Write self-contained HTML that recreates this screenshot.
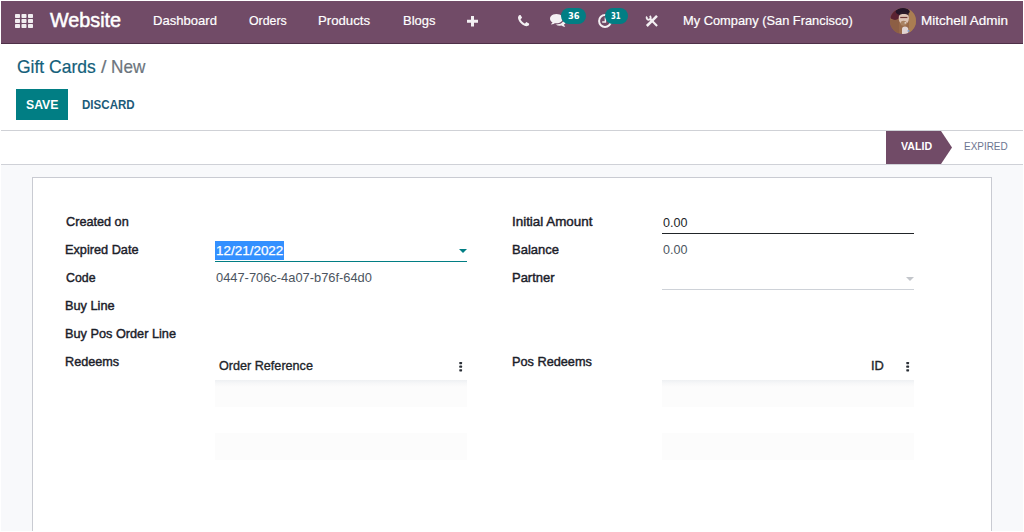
<!DOCTYPE html>
<html lang="en">
<head>
<meta charset="utf-8">
<title>Gift Cards / New</title>
<style>
*{box-sizing:border-box;margin:0;padding:0}
html,body{width:1024px;height:532px;overflow:hidden;background:#fff}
body{font-family:"Liberation Sans",sans-serif;font-size:13px;color:#212529;position:relative}
.abs,.m{position:absolute;white-space:nowrap;line-height:1}
.m{transform-origin:0 50%}
svg{display:block;overflow:visible}
#nav{position:absolute;left:1px;top:1px;width:1022px;height:43px;background:#714b67;border-bottom:1px solid #4e3048}
.badge{position:absolute;height:16px;border-radius:8px;background:#017e84}
#bg{position:absolute;left:1px;top:164px;width:1022px;height:367px;background:#f8f9fb;border-top:1px solid #cfd1d7}
#sheet{position:absolute;left:32px;top:177px;width:960px;height:354px;background:#fff;border:1px solid #c9cbd2;border-bottom:none}
#hr1{position:absolute;left:1px;top:130px;width:1022px;height:1px;background:#cfd1d6}
.stripe{position:absolute;height:27px;background:#fcfcfc}
.stripe.first{background:linear-gradient(#eef0f3,#f6f7f8 3px,#fcfcfc 7px)}
.line{position:absolute;height:1px}
.ic{opacity:.92}
.dj{font-family:"DejaVu Sans",sans-serif}
</style>
</head>
<body>
<header>
<!-- top navigation bar -->
<div id="nav"></div>
<svg class="abs" style="left:15.2px;top:14px;opacity:.9" width="18" height="14" viewBox="0 0 18 14"><g fill="#fff"><rect x="0" y="0" width="5" height="4" rx=".7"/><rect x="6.5" y="0" width="5" height="4" rx=".7"/><rect x="13" y="0" width="5" height="4" rx=".7"/><rect x="0" y="5" width="5" height="4" rx=".7"/><rect x="6.5" y="5" width="5" height="4" rx=".7"/><rect x="13" y="5" width="5" height="4" rx=".7"/><rect x="0" y="10" width="5" height="4" rx=".7"/><rect x="6.5" y="10" width="5" height="4" rx=".7"/><rect x="13" y="10" width="5" height="4" rx=".7"/></g></svg>
<span class="m" id="brand" style="left:49.60px;top:11.41px;font-size:19.6px;color:#fff;transform:scaleX(1.0095);-webkit-text-stroke:.5px #fff">Website</span>
<span class="m" id="n1" style="left:152.74px;top:13.69px;font-size:13.6px;color:#fff;transform:scaleX(0.9609);-webkit-text-stroke:.2px #fff">Dashboard</span>
<span class="m" id="n2" style="left:248.70px;top:13.69px;font-size:13.6px;color:#fff;transform:scaleX(0.9078);-webkit-text-stroke:.2px #fff">Orders</span>
<span class="m" id="n3" style="left:318.03px;top:13.69px;font-size:13.6px;color:#fff;transform:scaleX(0.9707);-webkit-text-stroke:.2px #fff">Products</span>
<span class="m" id="n4" style="left:402.55px;top:13.69px;font-size:13.6px;color:#fff;transform:scaleX(0.9546);-webkit-text-stroke:.2px #fff">Blogs</span>
<!-- plus -->
<svg class="abs ic" style="left:467px;top:15.6px" width="11" height="10.4" viewBox="0 0 11 10.4"><path fill="#fff" d="M4 0h3v3.7h4v3h-4v3.7h-3v-3.7h-4v-3h4z"/></svg>
<!-- phone -->
<svg class="abs ic" style="left:518.2px;top:15.3px" width="11.2" height="11.2" viewBox="192 128 1408 1408"><path fill="#fff" d="M1600 1240q0 27-10 70.500t-21 68.500q-21 50-122 106-94 51-186 51-27 0-53-3.500t-57.500-12.500-47-14.500-55.500-20.500-49-18q-98-35-175-83-127-79-264-216t-216-264q-48-77-83-175-3-9-18-49t-20.500-55.500-14.500-47-12.500-57.500-3.500-53q0-92 51-186 56-101 106-122 25-11 68.500-21t70.500-10q14 0 21 3 18 6 53 76 11 19 30 54t35 63.500 31 53.500q3 4 17.500 25t21.500 35.500 7 28.500q0 20-28.500 50t-62 55-62 53-28.500 46q0 9 5 22.500t8.500 20.500 14 24 11.500 19q76 137 174 235t235 174q2 1 19 11.500t24 14 20.500 8.500 22.500 5q18 0 46-28.500t53-62 55-62 50-28.500q14 0 28.500 7t35.500 21.500 25 17.500q25 15 53.500 31t63.500 35 54 30q70 35 76 53 3 7 3 21z"/></svg>
<!-- chat bubbles -->
<svg class="abs ic" style="left:549.8px;top:14.300px" width="16.300" height="12.800" viewBox="0 256 1792 1408"><path fill="#fff" d="M1408 768q0 139-94 257t-256.500 186.500-353.500 68.500q-86 0-176-16-124 88-278 128-36 9-86 16h-3q-11 0-20.500-8t-11.500-21q-1-3-1-6.500t.5-6.500 2-6l2.500-5t3.500-5.500 4-5 4.500-5 4-4.500q5-6 23-25t26-29.500 22.500-29 25-38.500 20.500-44q-124-72-195-177t-71-224q0-139 94-257t256.500-186.500 353.500-68.500 353.500 68.500 256.500 186.500 94 257zm384 256q0 120-71 224.500t-195 176.500q10 24 20.500 44t25 38.500 22.500 29 26 29.500 23 25q1 1 4 4.500t4.500 5 4 5 3.500 5.500l2.500 5t2 6 .5 6.500-1 6.500q-3 14-13 22t-22 7q-50-7-86-16-154-40-278-128-90 16-176 16-271 0-472-132 58 4 88 4 161 0 309-45t264-129q125-92 192-212t67-254q0-77-23-152 129 71 204 178t75 230z"/></svg>
<div class="badge" style="left:561px;top:8px;width:25px"></div>
<span class="m dj" id="b36" style="left:567.70px;top:12.10px;font-size:9px;color:#fff;transform:scaleX(0.9215);font-weight:bold">36</span>
<!-- clock -->
<svg class="abs ic" style="left:598px;top:13.900px" width="14" height="14" viewBox="0 0 14 14"><circle cx="7" cy="7" r="5.9" fill="none" stroke="#fff" stroke-width="2"/><path d="M7.4 3.4v4.6h-3.2" fill="none" stroke="#fff" stroke-width="1.5"/></svg>
<div class="badge" style="left:605px;top:8px;width:23px"></div>
<span class="m dj" id="b31" style="left:611.10px;top:12.10px;font-size:9px;color:#fff;transform:scaleX(0.7666);font-weight:bold">31</span>
<!-- tools -->
<svg class="abs ic" style="left:646px;top:15px" width="12" height="12" viewBox="0 0 12 12"><g fill="none" stroke="#fff"><path d="M11 .8L.8 11" stroke-width="2.500"/><path d="M4 3.800L11.100 10.900" stroke-width="2.100"/><path d="M3.700 1A2 2 0 1 1 1 1.600" stroke-width="1.900"/></g></svg>
<span class="m" id="n5" style="left:682.76px;top:13.69px;font-size:13.6px;color:#fff;transform:scaleX(0.9441);-webkit-text-stroke:.2px #fff">My Company (San Francisco)</span>
<!-- avatar -->
<div class="abs" style="left:890px;top:8px;width:26px;height:26px;border-radius:50%;overflow:hidden"><svg width="26" height="26" viewBox="0 0 26 26"><rect width="26" height="26" fill="#98694a"/><rect x="19" y="0" width="7" height="26" fill="#aa7d52"/><rect x="0" y="12" width="9" height="14" fill="#8d5f45"/><ellipse cx="5" cy="7" rx="5.500" ry="5" fill="#5a2232"/><ellipse cx="12.700" cy="3.600" rx="7" ry="3.800" fill="#241528"/><ellipse cx="13.800" cy="10.200" rx="5.100" ry="6.300" fill="#dcc3b6"/><path d="M8.800 7.500c.6-2.800 2.600-3.900 5-3.900s4.400 1.100 5 3.900c-1.600-1.200-3.200-1.600-5-1.600s-3.400.4-5 1.600z" fill="#2a1a2a"/><rect x="10.200" y="8.900" width="7.200" height="1.200" fill="#6e3838"/><ellipse cx="13.600" cy="15.200" rx="3.100" ry="2.500" fill="#a98263"/><rect x="14.600" y="14.300" width="1.400" height="1.200" fill="#f2ece8"/><path d="M12 26v-5q0-2.500 3-2.500t3.300 2.500v5z" fill="#e0d3d4"/><rect x="17.600" y="22" width="1.800" height="1.800" fill="#7f9fd6"/></svg></div>
<span class="m" id="n6" style="left:920.91px;top:13.69px;font-size:13.6px;color:#fff;transform:scaleX(0.9916);-webkit-text-stroke:.2px #fff">Mitchell Admin</span>
</header>
<section>
<!-- control panel -->
<span class="m" id="bc1" style="left:17.00px;top:56.92px;font-size:19px;color:#13607a;transform:scaleX(0.9198);-webkit-text-stroke:.2px #13607a">Gift Cards</span>
<span class="m" id="bc2" style="left:100.50px;top:56.92px;font-size:19px;color:#6c757d;transform:scaleX(1.0333);-webkit-text-stroke:.2px #6c757d">/</span>
<span class="m" id="bc3" style="left:110.90px;top:56.92px;font-size:19px;color:#6c757d;transform:scaleX(0.9038);-webkit-text-stroke:.2px #6c757d">New</span>
<div class="abs" id="save" style="left:16px;top:89px;width:52px;height:31px;background:#017e84"></div>
<span class="m" id="savet" style="left:26.10px;top:99.33px;font-size:12.6px;color:#fff;transform:scaleX(0.9709);font-weight:bold">SAVE</span>
<span class="m" id="disc" style="left:81.80px;top:99.33px;font-size:12.6px;color:#1d5b79;transform:scaleX(0.9183);font-weight:bold">DISCARD</span>
<div id="hr1"></div>
<!-- status bar -->
<svg class="abs" style="left:886px;top:131px" width="66" height="33" viewBox="0 0 66 33"><path d="M0 0h55l11 16.500l-11 16.500h-55z" fill="#714b67"/></svg>
<span class="m" id="valid" style="left:900.80px;top:140.69px;font-size:11px;color:#fff;transform:scaleX(0.9646);font-weight:bold">VALID</span>
<span class="m" id="expired" style="left:963.60px;top:140.69px;font-size:11px;color:#6c7590;transform:scaleX(0.9039)">EXPIRED</span>
</section>
<main>
<div id="bg"></div>
<div id="sheet"></div>

<!-- left column -->
<span class="m" id="l1" style="left:65.70px;top:215.00px;font-size:13px;color:#1b2029;transform:scaleX(0.9752);-webkit-text-stroke:.42px #1b2029">Created on</span>
<span class="m" id="l2" style="left:64.72px;top:243.00px;font-size:13px;color:#1b2029;transform:scaleX(0.9781);-webkit-text-stroke:.42px #1b2029">Expired Date</span>
<span class="m" id="l3" style="left:65.70px;top:271.00px;font-size:13px;color:#1b2029;transform:scaleX(0.9498);-webkit-text-stroke:.42px #1b2029">Code</span>
<span class="m" id="l4" style="left:64.72px;top:299.00px;font-size:13px;color:#1b2029;transform:scaleX(0.9805);-webkit-text-stroke:.42px #1b2029">Buy Line</span>
<span class="m" id="l5" style="left:64.72px;top:327.00px;font-size:13px;color:#1b2029;transform:scaleX(0.9785);-webkit-text-stroke:.42px #1b2029">Buy Pos Order Line</span>
<span class="m" id="l6" style="left:64.73px;top:355.00px;font-size:13px;color:#1b2029;transform:scaleX(0.9721);-webkit-text-stroke:.42px #1b2029">Redeems</span>
<div class="abs" style="left:215px;top:241px;width:69px;height:19px;background:#3390ff"></div>
<span class="m" id="date" style="left:216.20px;top:244.00px;font-size:13px;color:#fff;transform:scaleX(1.0350);-webkit-text-stroke:.25px #fff">12/21/2022</span>
<div class="line" style="left:215px;top:261px;width:252px;background:#017e84"></div>
<svg class="abs" style="left:459.400px;top:249.300px" width="8" height="4" viewBox="0 0 8 4"><path d="M0 0h8l-4 4z" fill="#017e84"/></svg>
<span class="m" id="code" style="left:215.70px;top:271.00px;font-size:13px;color:#4c5560;transform:scaleX(0.9896)">0447-706c-4a07-b76f-64d0</span>
<span class="m" id="th1" style="left:218.90px;top:359.00px;font-size:13px;color:#212529;transform:scaleX(0.9701);-webkit-text-stroke:.35px #212529">Order Reference</span>
<svg class="abs" style="left:459px;top:361.500px" width="3.400" height="9.400" viewBox="0 0 3.400 9.400"><g fill="#2a2f36"><rect x=".3" width="2.800" height="2.200" rx=".6"/><rect x=".3" y="3.600" width="2.800" height="2.200" rx=".6"/><rect x=".3" y="7.200" width="2.800" height="2.200" rx=".6"/></g></svg>
<div class="stripe first" style="left:215px;top:380px;width:252px"></div>
<div class="stripe" style="left:215px;top:433px;width:252px"></div>

<!-- right column -->
<span class="m" id="r1" style="left:511.57px;top:215.00px;font-size:13px;color:#1b2029;transform:scaleX(1.0301);-webkit-text-stroke:.42px #1b2029">Initial Amount</span>
<span class="m" id="r2" style="left:511.60px;top:243.00px;font-size:13px;color:#1b2029;transform:scaleX(0.9989);-webkit-text-stroke:.42px #1b2029">Balance</span>
<span class="m" id="r3" style="left:511.60px;top:271.00px;font-size:13px;color:#1b2029;transform:scaleX(0.9976);-webkit-text-stroke:.42px #1b2029">Partner</span>
<span class="m" id="r4" style="left:511.62px;top:355.00px;font-size:13px;color:#1b2029;transform:scaleX(0.9784);-webkit-text-stroke:.42px #1b2029">Pos Redeems</span>
<span class="m" id="v1" style="left:662.60px;top:216.00px;font-size:13px;color:#212529;transform:scaleX(0.9652)">0.00</span>
<div class="line" style="left:662px;top:233px;width:252px;background:#212529"></div>
<span class="m" id="v2" style="left:662.60px;top:243.00px;font-size:13px;color:#4c5560;transform:scaleX(0.9652)">0.00</span>
<svg class="abs" style="left:906px;top:277.300px" width="8" height="4" viewBox="0 0 8 4"><path d="M0 0h8l-4 4z" fill="#c3c6cb"/></svg>
<div class="line" style="left:662px;top:289px;width:252px;background:#ced2d8"></div>
<span class="m" id="th2" style="left:871.21px;top:359.00px;font-size:13px;color:#212529;transform:scaleX(0.9904);-webkit-text-stroke:.35px #212529">ID</span>
<svg class="abs" style="left:906px;top:361.500px" width="3.400" height="9.400" viewBox="0 0 3.400 9.400"><g fill="#2a2f36"><rect x=".3" width="2.800" height="2.200" rx=".6"/><rect x=".3" y="3.600" width="2.800" height="2.200" rx=".6"/><rect x=".3" y="7.200" width="2.800" height="2.200" rx=".6"/></g></svg>
<div class="stripe first" style="left:662px;top:380px;width:252px"></div>
<div class="stripe" style="left:662px;top:433px;width:252px"></div>
</main>
</body>
</html>
